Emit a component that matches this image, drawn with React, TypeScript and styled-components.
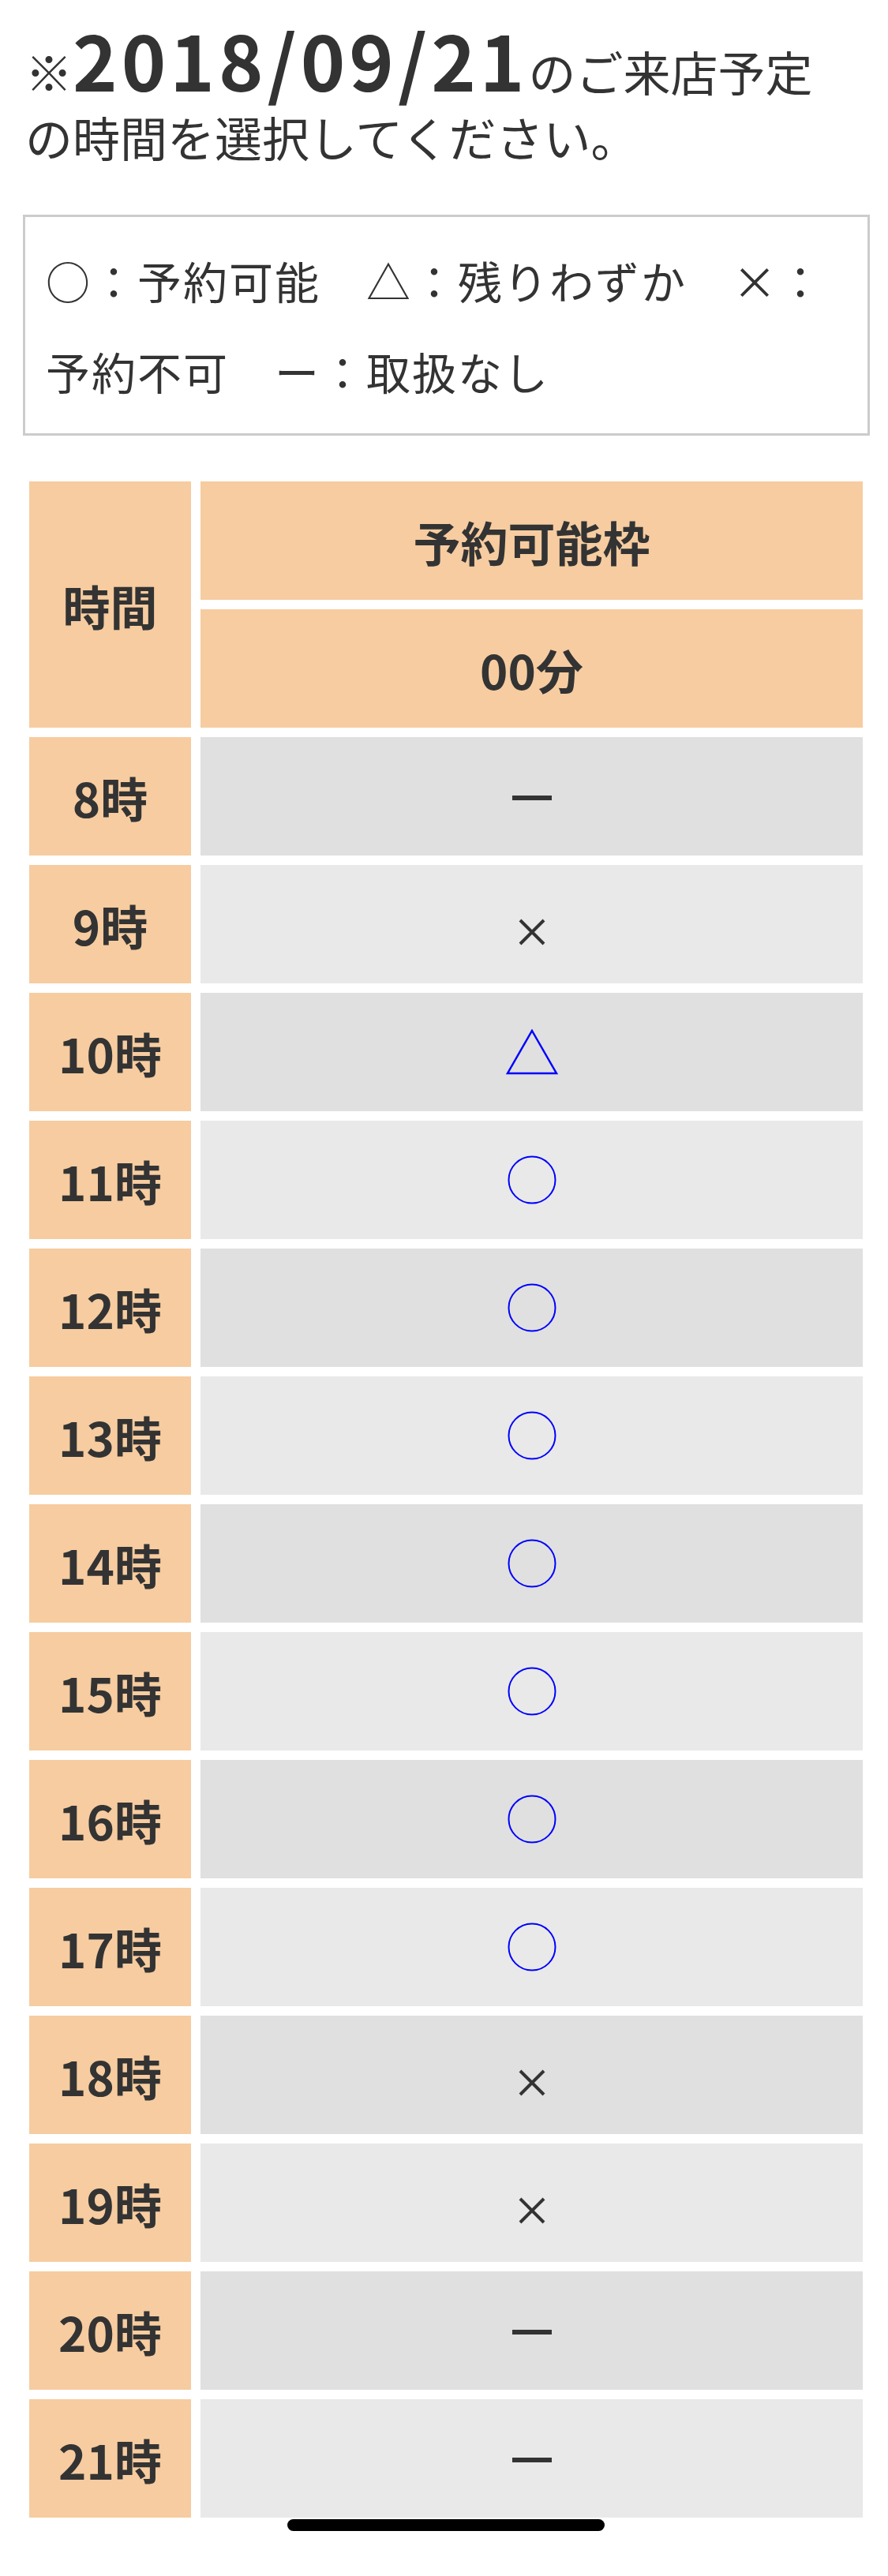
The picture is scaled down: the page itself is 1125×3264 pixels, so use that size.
import React from "react";
import styled, { createGlobalStyle } from "styled-components";

const GlobalStyle = createGlobalStyle`
  html, body {
    margin: 0;
    padding: 0;
    background: #fff;
  }
  body {
    font-family: "Noto Sans CJK JP", "Noto Sans", sans-serif;
    color: #333;
  }
`;

const Page = styled.div`
  position: relative;
  min-height: 3264px;
  padding: 0 23px 0 29px;
  box-sizing: border-box;
`;

const Title = styled.p`
  margin: 0;
  padding: 33px 50px 0 3px;
  font-size: 60px;
  line-height: 83px;
  font-weight: 400;
`;

const DateText = styled.span`
  font-size: 96px;
  font-weight: 700;
  letter-spacing: 5px;
`;

const Legend = styled.div`
  margin-top: 58px;
  border: 3px solid #ccc;
  padding: 22px 26px;
  font-size: 56px;
  line-height: 115px;
  letter-spacing: 2px;
`;

const Table = styled.div`
  margin: 58px 9px 0 8px;
  display: grid;
  grid-template-columns: 205px 1fr;
  grid-auto-rows: 150px;
  gap: 12px;
`;

const Cell = styled.div<{ $tone: "head" | "dark" | "light"; $span?: number }>`
  display: flex;
  align-items: center;
  justify-content: center;
  font-size: 60px;
  font-weight: 700;
  color: #333;
  grid-row: ${(p) => (p.$span ? `span ${p.$span}` : "auto")};
  background: ${(p) =>
    p.$tone === "head" ? "#f6cca0" : p.$tone === "dark" ? "#e0e0e0" : "#e9e9e9"};
`;

const HomeBar = styled.div`
  position: fixed;
  left: 364px;
  bottom: 57px;
  width: 402px;
  height: 15px;
  border-radius: 8px;
  background: #000;
`;

type Mark = "ok" | "few" | "full" | "none";

const MarkIcon = ({ mark }: { mark: Mark }) => {
  if (mark === "ok")
    return (
      <svg width="64" height="64" viewBox="0 0 64 64" aria-label="○">
        <circle cx="32" cy="32" r="29.5" fill="none" stroke="#0000ff" strokeWidth="2" />
      </svg>
    );
  if (mark === "few")
    return (
      <svg width="66" height="58" viewBox="0 0 66 58" aria-label="△">
        <path d="M33 2 L64 56 L2 56 Z" fill="none" stroke="#0000ff" strokeWidth="2.5" />
      </svg>
    );
  if (mark === "full")
    return (
      <svg width="36" height="36" viewBox="0 0 36 36" aria-label="×" style={{ marginTop: 20 }}>
        <path d="M3 3 L33 33 M33 3 L3 33" stroke="#333" strokeWidth="4" />
      </svg>
    );
  return (
    <svg width="50" height="6" viewBox="0 0 50 6" aria-label="ー" style={{ marginTop: 4 }}>
      <rect width="50" height="6" fill="#333" />
    </svg>
  );
};

const slots: { hour: number; mark: Mark }[] = [
  { hour: 8, mark: "none" },
  { hour: 9, mark: "full" },
  { hour: 10, mark: "few" },
  { hour: 11, mark: "ok" },
  { hour: 12, mark: "ok" },
  { hour: 13, mark: "ok" },
  { hour: 14, mark: "ok" },
  { hour: 15, mark: "ok" },
  { hour: 16, mark: "ok" },
  { hour: 17, mark: "ok" },
  { hour: 18, mark: "full" },
  { hour: 19, mark: "full" },
  { hour: 20, mark: "none" },
  { hour: 21, mark: "none" },
];

const App: React.FC = () => {
  return (
    <Page>
      <GlobalStyle />
      <Title>
        ※<DateText>2018/09/21</DateText>のご来店予定の時間を選択してください。
      </Title>
      <Legend>○：予約可能　△：残りわずか　×：予約不可　ー：取扱なし</Legend>
      <Table>
        <Cell $tone="head" $span={2}>時間</Cell>
        <Cell $tone="head">予約可能枠</Cell>
        <Cell $tone="head">00分</Cell>
        {slots.map((slot, i) => (
          <React.Fragment key={slot.hour}>
            <Cell $tone="head">{slot.hour}時</Cell>
            <Cell $tone={i % 2 === 0 ? "dark" : "light"}>
              <MarkIcon mark={slot.mark} />
            </Cell>
          </React.Fragment>
        ))}
      </Table>
      <HomeBar />
    </Page>
  );
};

export default App;
